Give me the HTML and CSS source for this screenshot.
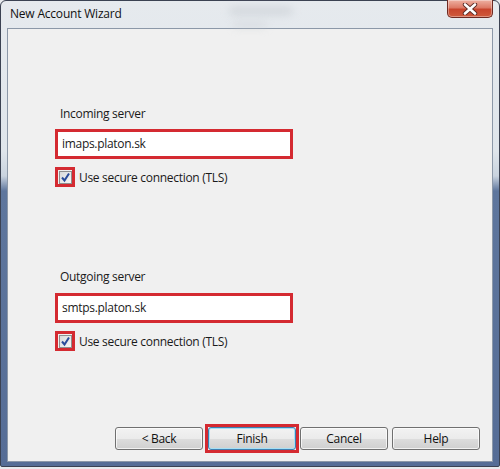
FILE: index.html
```html
<!DOCTYPE html>
<html>
<head>
<meta charset="utf-8">
<link rel="stylesheet" href="styles.css">
</head>
<body>
<div class="window">
  <div class="titlebar">
    <span class="title">New Account Wizard</span>
    <span class="blur blur1"></span>
    <span class="blur blur2"></span>
    <div class="close">
      <svg width="18" height="12" viewBox="0 0 18 12">
        <path d="M4 1.5 L14 10.5 M14 1.5 L4 10.5" stroke="#5a2a24" stroke-width="4.4" stroke-linecap="round"/>
        <path d="M4 1.5 L14 10.5 M14 1.5 L4 10.5" stroke="#ffffff" stroke-width="2.6" stroke-linecap="round"/>
      </svg>
    </div>
  </div>
  <div class="client">
    <div class="content">
      <div class="label first">Incoming server</div>
      <div class="textbox">imaps.platon.sk</div>
      <div class="checkrow">
        <span class="checkhl">
          <span class="checkbox">
            <svg width="11" height="11" viewBox="0 0 11 11"><path d="M2 5.5 L4.5 8.5 L9 1.5" fill="none" stroke="#2a4c9a" stroke-width="2"/></svg>
          </span>
        </span>
        <span class="checklabel">Use secure connection (TLS)</span>
      </div>

      <div class="label second">Outgoing server</div>
      <div class="textbox">smtps.platon.sk</div>
      <div class="checkrow">
        <span class="checkhl">
          <span class="checkbox">
            <svg width="11" height="11" viewBox="0 0 11 11"><path d="M2 5.5 L4.5 8.5 L9 1.5" fill="none" stroke="#2a4c9a" stroke-width="2"/></svg>
          </span>
        </span>
        <span class="checklabel">Use secure connection (TLS)</span>
      </div>

      <div class="buttons">
        <button class="btn back">&lt; Back</button>
        <span class="btnhl"><button class="btn default">Finish</button></span>
        <button class="btn cancel">Cancel</button>
        <button class="btn">Help</button>
      </div>
    </div>
  </div>
</div>
</body>
</html>
```

FILE: styles.css
```css
html, body {
  margin: 0;
  padding: 0;
  background: #e8ebee;
}
body {
  width: 500px;
  height: 469px;
  overflow: hidden;
  font-family: "Open Sans", "Noto Sans", sans-serif;
  font-size: 12px;
  letter-spacing: -0.3px;
  color: #1a1a1a;
}
.window {
  box-sizing: border-box;
  width: 500px;
  height: 467px;
  border: 1px solid #3b4252;
  border-radius: 6px 6px 2px 2px;
  background: linear-gradient(to bottom, #e6eaee 0px, #dfe5eb 150px, #c9d3df 175px, #5e769d 190px, #566d96 100%);
  display: flex;
  flex-direction: column;
  padding: 0 6px 4px 6px;
  position: relative;
}
.titlebar {
  height: 27px;
  position: relative;
  flex: none;
}
.title {
  position: absolute;
  left: 3px;
  top: 5px;
  font-size: 12px;
  line-height: 16px;
  letter-spacing: -0.2px;
  color: #111;
}
.blur {
  position: absolute;
  border-radius: 8px;
  filter: blur(4px);
  background: #c4c9cf;
}
.blur1 { left: 222px; top: 6px; width: 64px; height: 8px; opacity: 0.6; }
.blur2 { left: 226px; top: 21px; width: 34px; height: 6px; opacity: 0.4; }
.close {
  position: absolute;
  right: 0;
  top: -1px;
  width: 46px;
  height: 18px;
  box-sizing: border-box;
  border: 1px solid #6e2a22;
  border-top: none;
  border-radius: 0 0 5px 5px;
  background: linear-gradient(to bottom, #eeb1a2 0%, #dd7a66 45%, #c8452d 55%, #cf5a3c 100%);
  display: flex;
  align-items: center;
  justify-content: center;
  box-shadow: inset 0 0 0 1px rgba(255,255,255,0.35);
}
.client {
  flex: 1;
  border: 1px solid #8c98a8;
  background: #f0f0f0;
  display: flex;
  flex-direction: column;
}
.content {
  flex: 1;
  display: flex;
  flex-direction: column;
  padding: 0 12px 8px 47px;
}
.label {
  line-height: 15px;
  height: 15px;
  padding-left: 5px;
  margin-bottom: 8px;
}
.label.first { margin-top: 77px; }
.label.second { margin-top: 82px; margin-bottom: 9px; }
.textbox {
  box-sizing: border-box;
  width: 238px;
  height: 30px;
  border: 3px solid #d42a31;
  background: #fff;
  padding-left: 4px;
  line-height: 24px;
  font-size: 12px;
}
.checkrow {
  display: flex;
  align-items: center;
  margin-top: 8px;
  height: 20px;
}
.checkhl {
  box-sizing: border-box;
  width: 20px;
  height: 20px;
  border: 3px solid #d42a31;
  display: flex;
  align-items: center;
  justify-content: center;
}
.checkbox {
  box-sizing: border-box;
  width: 13px;
  height: 13px;
  border: 1px solid #8e8f8f;
  background: linear-gradient(135deg, #d8dadb, #f6f6f6);
  display: flex;
  align-items: center;
  justify-content: center;
}
.checklabel {
  margin-left: 4px;
  line-height: 15px;
}
.buttons {
  margin-top: auto;
  display: flex;
  justify-content: flex-end;
  align-items: center;
}
.btn {
  box-sizing: border-box;
  width: 88px;
  height: 23px;
  border: 1px solid #707070;
  border-radius: 3px;
  background: linear-gradient(to bottom, #f2f2f2 0%, #ebebeb 50%, #dddddd 51%, #cfcfcf 100%);
  font-family: "Open Sans", "Noto Sans", sans-serif;
  font-size: 12px;
  letter-spacing: -0.3px;
  color: #111;
  padding: 0;
  line-height: 20px;
  box-shadow: inset 0 0 0 1px rgba(255,255,255,0.7);
}
.back { margin-right: 2px; }
.cancel { margin-right: 4px; }
.btnhl {
  border: 3px solid #d42a31;
  display: flex;
  margin-right: 1px;
}
.btn.default {
  border-color: #3c7fb1;
  box-shadow: inset 0 0 0 1px #a6e0f6;
}
```
